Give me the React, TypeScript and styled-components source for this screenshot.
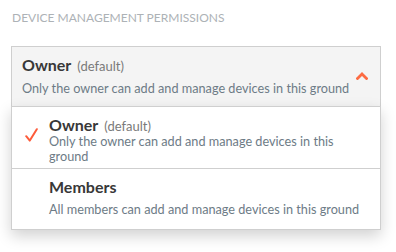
import React from "react";
import styled, { createGlobalStyle } from "styled-components";

const Global = createGlobalStyle`
  html, body { margin: 0; padding: 0; background: #fff; }
  body { font-family: Lato, "Open Sans", sans-serif; -webkit-font-smoothing: antialiased; }
`;

const Page = styled.div`
  width: 396px;
  height: 252px;
  padding: 10px 15px 0 11px;
  box-sizing: border-box;
  position: relative;
`;

const Label = styled.div`
  font-size: 12px;
  line-height: 16px;
  color: #adb2b6;
  text-transform: uppercase;
  padding-left: 1px;
  margin-bottom: 20px;
`;

const Field = styled.div`
  position: relative;
`;

const Select = styled.div`
  height: 61px;
  box-sizing: border-box;
  border: 1px solid #cfcfcf;
  background: #f4f4f4;
  display: flex;
  align-items: flex-start;
  padding: 8px 12px 0 10px;
  gap: 3px;
`;

const Body = styled.div`
  flex: 1;
  min-width: 0;
`;

const TitleRow = styled.div<{ $tight?: boolean }>`
  display: flex;
  align-items: baseline;
  gap: 6px;
  line-height: ${(p) => (p.$tight ? "16px" : "20px")};
  margin-bottom: ${(p) => (p.$tight ? "0" : "5px")};
`;

const Title = styled.span`
  font-weight: 700;
  font-size: 16px;
  color: #383838;
`;

const Default = styled.span`
  font-size: 13px;
  color: #7a7a7a;
`;

const Desc = styled.div`
  font-size: 12.7px;
  line-height: 15px;
  color: #6d7b86;
`;

const Chevron = styled.svg`
  width: 12px;
  height: 8px;
  flex: none;
  align-self: center;
  margin-top: -9px;
`;

const Menu = styled.div`
  position: absolute;
  left: 0;
  right: 0;
  top: 60px;
  background: #fff;
  border: 1px solid #cfcfcf;
  box-shadow: 0 6px 14px rgba(0, 0, 0, 0.18);
  z-index: 2;
`;

const Option = styled.div<{ $first?: boolean }>`
  height: 61px;
  box-sizing: border-box;
  display: flex;
  align-items: flex-start;
  padding: ${(p) => (p.$first ? "10px" : "8px")} 12px 0 13px;
  border-top: ${(p) => (p.$first ? "none" : "1px solid #cfcfcf")};
`;

const CheckSlot = styled.div`
  width: 24px;
  flex: none;
`;

const Check = styled.svg`
  display: block;
  width: 13px;
  height: 14px;
  margin-top: 11px;
`;

export default function App() {
  return (
    <Page>
      <Global />
      <Label>Device management permissions</Label>
      <Field>
        <Select>
          <Body>
            <TitleRow>
              <Title>Owner</Title>
              <Default>(default)</Default>
            </TitleRow>
            <Desc>Only the owner can add and manage devices in this ground</Desc>
          </Body>
          <Chevron viewBox="0 0 12 8">
            <path d="M1.5 6.5 L6 2 L10.5 6.5" fill="none" stroke="#fd6b42" strokeWidth="2.8" strokeLinecap="square" />
          </Chevron>
        </Select>
        <Menu>
          <Option $first>
            <CheckSlot>
              <Check viewBox="0 0 13 14">
                <path d="M1.2 8.2 L4.8 12.6 L11.8 1.2" fill="none" stroke="#fd5b3a" strokeWidth="2" strokeLinecap="round" strokeLinejoin="round" />
              </Check>
            </CheckSlot>
            <Body>
              <TitleRow $tight>
                <Title>Owner</Title>
                <Default>(default)</Default>
              </TitleRow>
              <Desc>Only the owner can add and manage devices in this ground</Desc>
            </Body>
          </Option>
          <Option>
            <CheckSlot />
            <Body>
              <TitleRow>
                <Title>Members</Title>
              </TitleRow>
              <Desc>All members can add and manage devices in this ground</Desc>
            </Body>
          </Option>
        </Menu>
      </Field>
    </Page>
  );
}
